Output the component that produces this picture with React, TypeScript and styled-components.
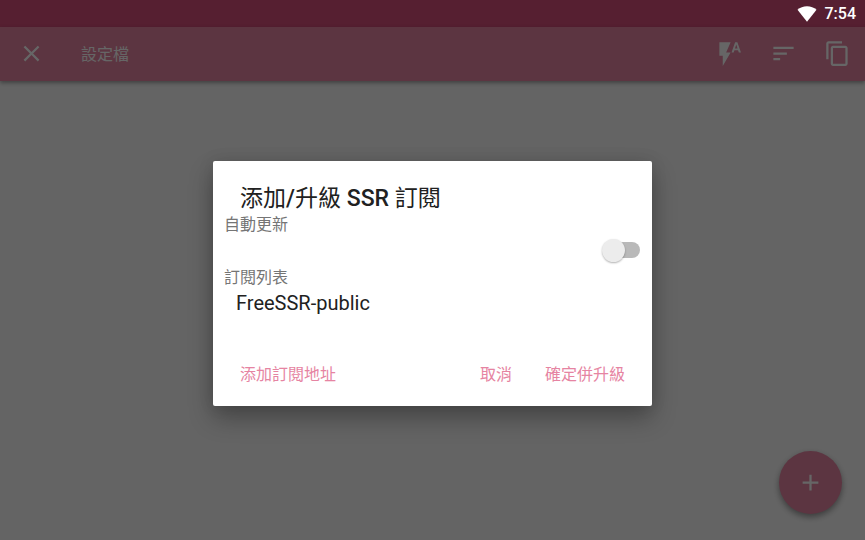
import React, { useState } from "react";
import styled, { createGlobalStyle } from "styled-components";

const pink = "#e684a2";

const GlobalStyle = createGlobalStyle`
  *, *::before, *::after { box-sizing: border-box; }
  body {
    margin: 0;
    font-family: Roboto, "Noto Sans CJK TC", sans-serif;
    background: #fafafa;
  }
  button { font: inherit; border: 0; padding: 0; background: none; cursor: pointer; }
  h1, h2, h3, p, ul { margin: 0; padding: 0; font-weight: 400; }
`;

const Page = styled.div`
  display: flex;
  flex-direction: column;
  min-height: 100vh;
`;

const StatusBar = styled.div`
  display: flex;
  align-items: center;
  justify-content: flex-end;
  gap: 8px;
  height: 27px;
  padding-right: 9px;
  background: #561f31;
  color: #fff;
  font-size: 16px;
  font-weight: 500;
  line-height: 27px;
`;

const Screen = styled.div`
  position: relative;
  flex: 1;
  display: flex;
  flex-direction: column;
`;

const Toolbar = styled.header`
  display: flex;
  align-items: center;
  height: 54px;
  padding: 0 14px 1px 18px;
  background: ${pink};
  color: #fff;
  box-shadow: 0 2px 4px rgba(0, 0, 0, 0.35);
`;

const ToolbarTitle = styled.h1`
  flex: 1;
  margin-left: 36px;
  padding-top: 3px;
  font-size: 16px;
  line-height: 24px;
`;

const Actions = styled.div`
  display: flex;
  gap: 27px;
`;

const IconButton = styled.button`
  display: flex;
  color: inherit;
`;

const Fab = styled.button`
  position: absolute;
  right: 23px;
  bottom: 26px;
  display: flex;
  align-items: center;
  justify-content: center;
  width: 63px;
  height: 63px;
  border-radius: 50%;
  background: ${pink};
  color: #fff;
  box-shadow: 0 3px 6px rgba(0, 0, 0, 0.4);
`;

const Scrim = styled.div`
  position: absolute;
  inset: 0;
  display: flex;
  align-items: center;
  justify-content: center;
  padding: 16px;
  background: rgba(0, 0, 0, 0.6);
`;

const Dialog = styled.section`
  width: 100%;
  max-width: 439px;
  padding: 24px 11px 13px;
  border-radius: 2px;
  background: #fff;
  color: #212121;
  box-shadow: 0 12px 24px rgba(0, 0, 0, 0.3), 0 0 16px rgba(0, 0, 0, 0.1);
`;

const DialogTitle = styled.h2`
  padding: 0 16px;
  font-size: 23px;
  line-height: 28px;
`;

const Latin = styled.span`
  font-weight: 500;
`;

const Caption = styled.label`
  display: block;
  color: #757575;
  font-size: 16px;
  line-height: 24px;
`;

const SwitchRow = styled.div`
  display: flex;
  justify-content: flex-end;
  padding: 5px 1px 8px 0;
`;

const Switch = styled.input`
  appearance: none;
  display: flex;
  align-items: center;
  width: 34px;
  height: 16px;
  margin: 0;
  border-radius: 8px;
  background: #b9b9b9;
  cursor: pointer;

  &::before {
    content: "";
    flex: none;
    width: 23px;
    height: 23px;
    margin: 0 -4px;
    border-radius: 50%;
    background: #ececec;
    box-shadow: 0 1px 2px rgba(0, 0, 0, 0.3);
  }
  &:checked { justify-content: flex-end; }
  &:checked::before { background: ${pink}; }
`;

const List = styled.ul`
  list-style: none;
`;

const ListItem = styled.li`
  padding: 0 12px;
  font-size: 20px;
  line-height: 26px;
`;

const ButtonBar = styled.div`
  display: flex;
  align-items: center;
  gap: 33px;
  padding: 0 16px;
  margin-top: 41px;
`;

const TextButton = styled.button<{ $leading?: boolean }>`
  margin-right: ${(p) => (p.$leading ? "auto" : "0")};
  color: ${pink};
  font-size: 16px;
  line-height: 36px;
`;

const Icon = ({ d, size = 27 }: { d: string; size?: number }) => (
  <svg width={size} height={size} viewBox="0 0 24 24" fill="currentColor" aria-hidden="true">
    <path d={d} />
  </svg>
);

const icons = {
  close: "M19 6.41L17.59 5 12 10.59 6.41 5 5 6.41 10.59 12 5 17.59 6.41 19 12 13.41 17.59 19 19 17.59 13.41 12z",
  flashAuto: "M3 2v12h3v9l7-12H9l4-9H3zm16 0h-2l-3.200 9h1.900l.7-2h3.200l.7 2h1.900L19 2zm-2.150 5.650L18 4l1.150 3.650h-2.300z",
  sort: "M3 18h6v-2H3v2zM3 6v2h18V6H3zm0 7h12v-2H3v2z",
  copy: "M16 1H4c-1.100 0-2 .9-2 2v14h2V3h12V1zm3 4H8c-1.100 0-2 .9-2 2v14c0 1.100.9 2 2 2h11c1.100 0 2-.9 2-2V7c0-1.100-.9-2-2-2zm0 16H8V7h11v14z",
  add: "M19 13h-6v6h-2v-6H5v-2h6V5h2v6h6v2z",
};

export default function App() {
  const [autoUpdate, setAutoUpdate] = useState(false);
  return (
    <Page>
      <GlobalStyle />
      <StatusBar>
        <svg width="20" height="16" viewBox="0 0 20 16" fill="#fff" aria-hidden="true">
          <path d="M0.500 3.700C3 1.500 6.300 0.300 10 0.300s7 1.200 9.500 3.400L10 15.700z" />
        </svg>
        <span>7:54</span>
      </StatusBar>
      <Screen>
        <Toolbar>
          <IconButton aria-label="關閉">
            <Icon d={icons.close} />
          </IconButton>
          <ToolbarTitle>設定檔</ToolbarTitle>
          <Actions>
            <IconButton aria-label="自動">
              <Icon d={icons.flashAuto} />
            </IconButton>
            <IconButton aria-label="排序">
              <Icon d={icons.sort} />
            </IconButton>
            <IconButton aria-label="複製">
              <Icon d={icons.copy} />
            </IconButton>
          </Actions>
        </Toolbar>
        <Fab aria-label="新增">
          <Icon d={icons.add} />
        </Fab>
        <Scrim>
          <Dialog role="dialog" aria-modal="true" aria-labelledby="dialog-title">
            <DialogTitle id="dialog-title">
              添加<Latin>/</Latin>升級 <Latin>SSR</Latin> 訂閱
            </DialogTitle>
            <Caption htmlFor="auto-update">自動更新</Caption>
            <SwitchRow>
              <Switch
                id="auto-update"
                type="checkbox"
                role="switch"
                checked={autoUpdate}
                onChange={(e) => setAutoUpdate(e.target.checked)}
              />
            </SwitchRow>
            <Caption as="h3" id="list-title">訂閱列表</Caption>
            <List aria-labelledby="list-title">
              <ListItem>FreeSSR-public</ListItem>
            </List>
            <ButtonBar>
              <TextButton $leading>添加訂閱地址</TextButton>
              <TextButton>取消</TextButton>
              <TextButton>確定併升級</TextButton>
            </ButtonBar>
          </Dialog>
        </Scrim>
      </Screen>
    </Page>
  );
}
